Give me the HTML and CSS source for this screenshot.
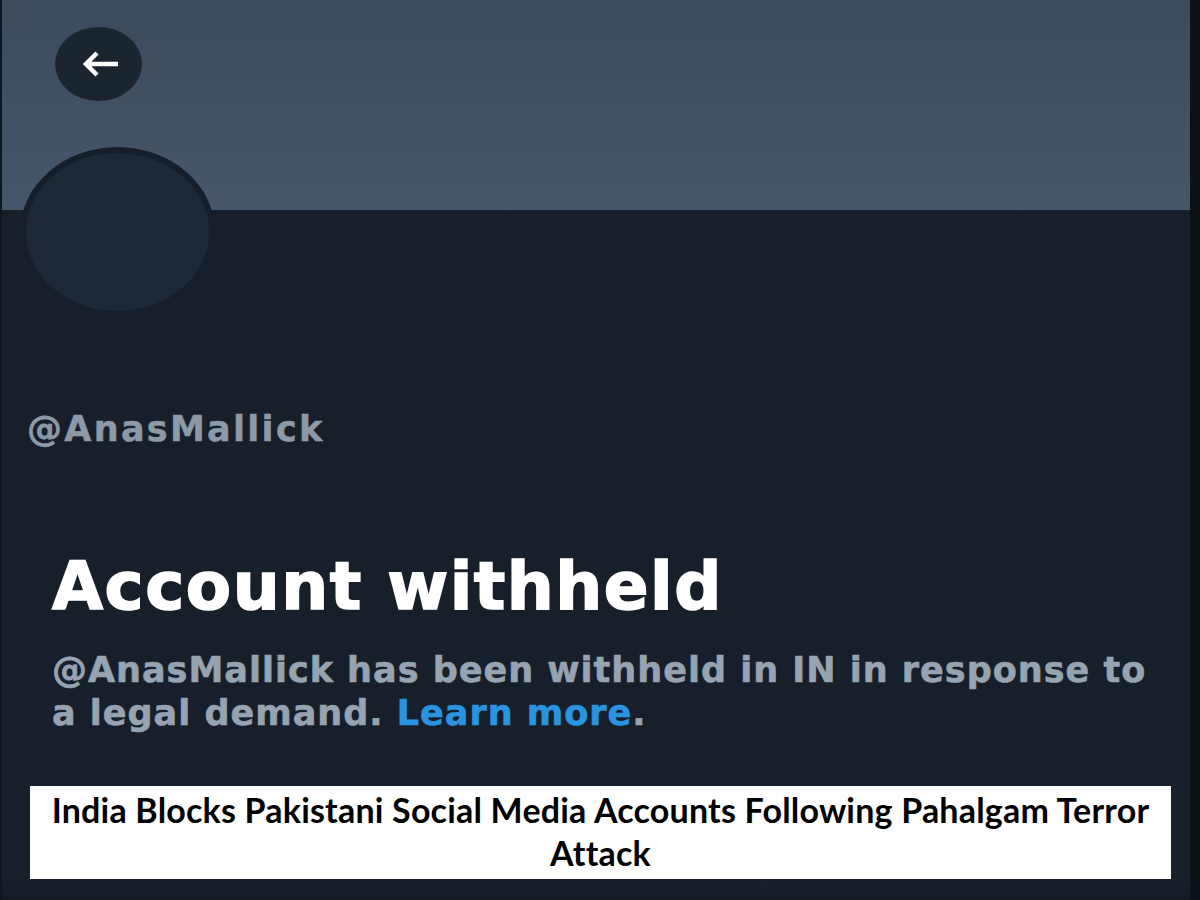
FILE: index.html
```html
<!DOCTYPE html>
<html lang="en">
<head>
<meta charset="utf-8">
<title>Account withheld</title>
<link rel="stylesheet" href="styles.css">
</head>
<body>
<div class="screen">
  <header class="banner">
    <div class="back" aria-label="Back">
      <svg class="back-icon" width="40" height="30" viewBox="0 0 40 30" aria-hidden="true">
        <path d="M5 15 H37 M16 4 L5 15 L16 26" fill="none" stroke="#ffffff" stroke-width="4.5" stroke-linejoin="miter"/>
      </svg>
    </div>
  </header>
  <div class="avatar"></div>
  <div class="handle">@AnasMallick</div>
  <h1 class="title">Account withheld</h1>
  <p class="notice">@AnasMallick has been withheld in IN in response to a legal demand. <span class="link">Learn more</span>.</p>
  <div class="caption">India Blocks Pakistani Social Media Accounts Following Pahalgam Terror Attack</div>
</div>
</body>
</html>
```
FILE: styles.css
```css
html, body {
  margin: 0;
  padding: 0;
}
body {
  width: 1200px;
  height: 900px;
  background: #0c1117;
  overflow: hidden;
}
.screen {
  width: 1188px;
  height: 900px;
  border-left: 2px solid #0f151c;
  background: linear-gradient(#17202a 0, #17202a 880px, #131a22 900px);
  display: flex;
  flex-direction: column;
  font-family: "DejaVu Sans", Verdana, sans-serif;
}
.banner {
  height: 210px;
  flex: none;
  box-sizing: border-box;
  padding: 27px 0 0 53px;
  background: linear-gradient(#3c4a5a, #46576a);
}
.back {
  width: 87px;
  height: 74px;
  border-radius: 50%;
  background: #1b2530;
  display: flex;
  align-items: center;
  justify-content: center;
}
.back-icon {
  margin-left: 4px;
}
.avatar {
  flex: none;
  margin: -63px 0 0 18px;
  width: 195px;
  height: 170px;
  box-sizing: border-box;
  border-radius: 50%;
  background: #1e2938;
  border: 6px solid #161f29;
}
.handle {
  margin: 92px 0 0 25px;
  font-size: 35px;
  line-height: 40px;
  font-weight: 700;
  letter-spacing: 2.3px;
  color: #8c99a7;
  -webkit-text-stroke: 0.5px #8c99a7;
}
.title {
  margin: 102px 0 0 50px;
  font-size: 66px;
  line-height: 72px;
  font-weight: 700;
  letter-spacing: 1.5px;
  color: #ffffff;
  -webkit-text-stroke: 1.6px #ffffff;
}
.notice {
  margin: 26px 0 0 50px;
  width: 1110px;
  font-size: 35px;
  line-height: 43px;
  font-weight: 700;
  letter-spacing: 1px;
  color: #96a3b0;
  -webkit-text-stroke: 0.6px #96a3b0;
}
.link {
  color: #2a94e0;
  -webkit-text-stroke: 0.6px #2a94e0;
}
.caption {
  margin: 51px 0 0 28px;
  width: 1141px;
  box-sizing: border-box;
  padding: 2px 14px 5px;
  background: #ffffff;
  color: #000000;
  text-align: center;
  font-family: Lato, "Open Sans", sans-serif;
  font-weight: 700;
  font-size: 34px;
  line-height: 43px;
  letter-spacing: 0.2px;
}
```
